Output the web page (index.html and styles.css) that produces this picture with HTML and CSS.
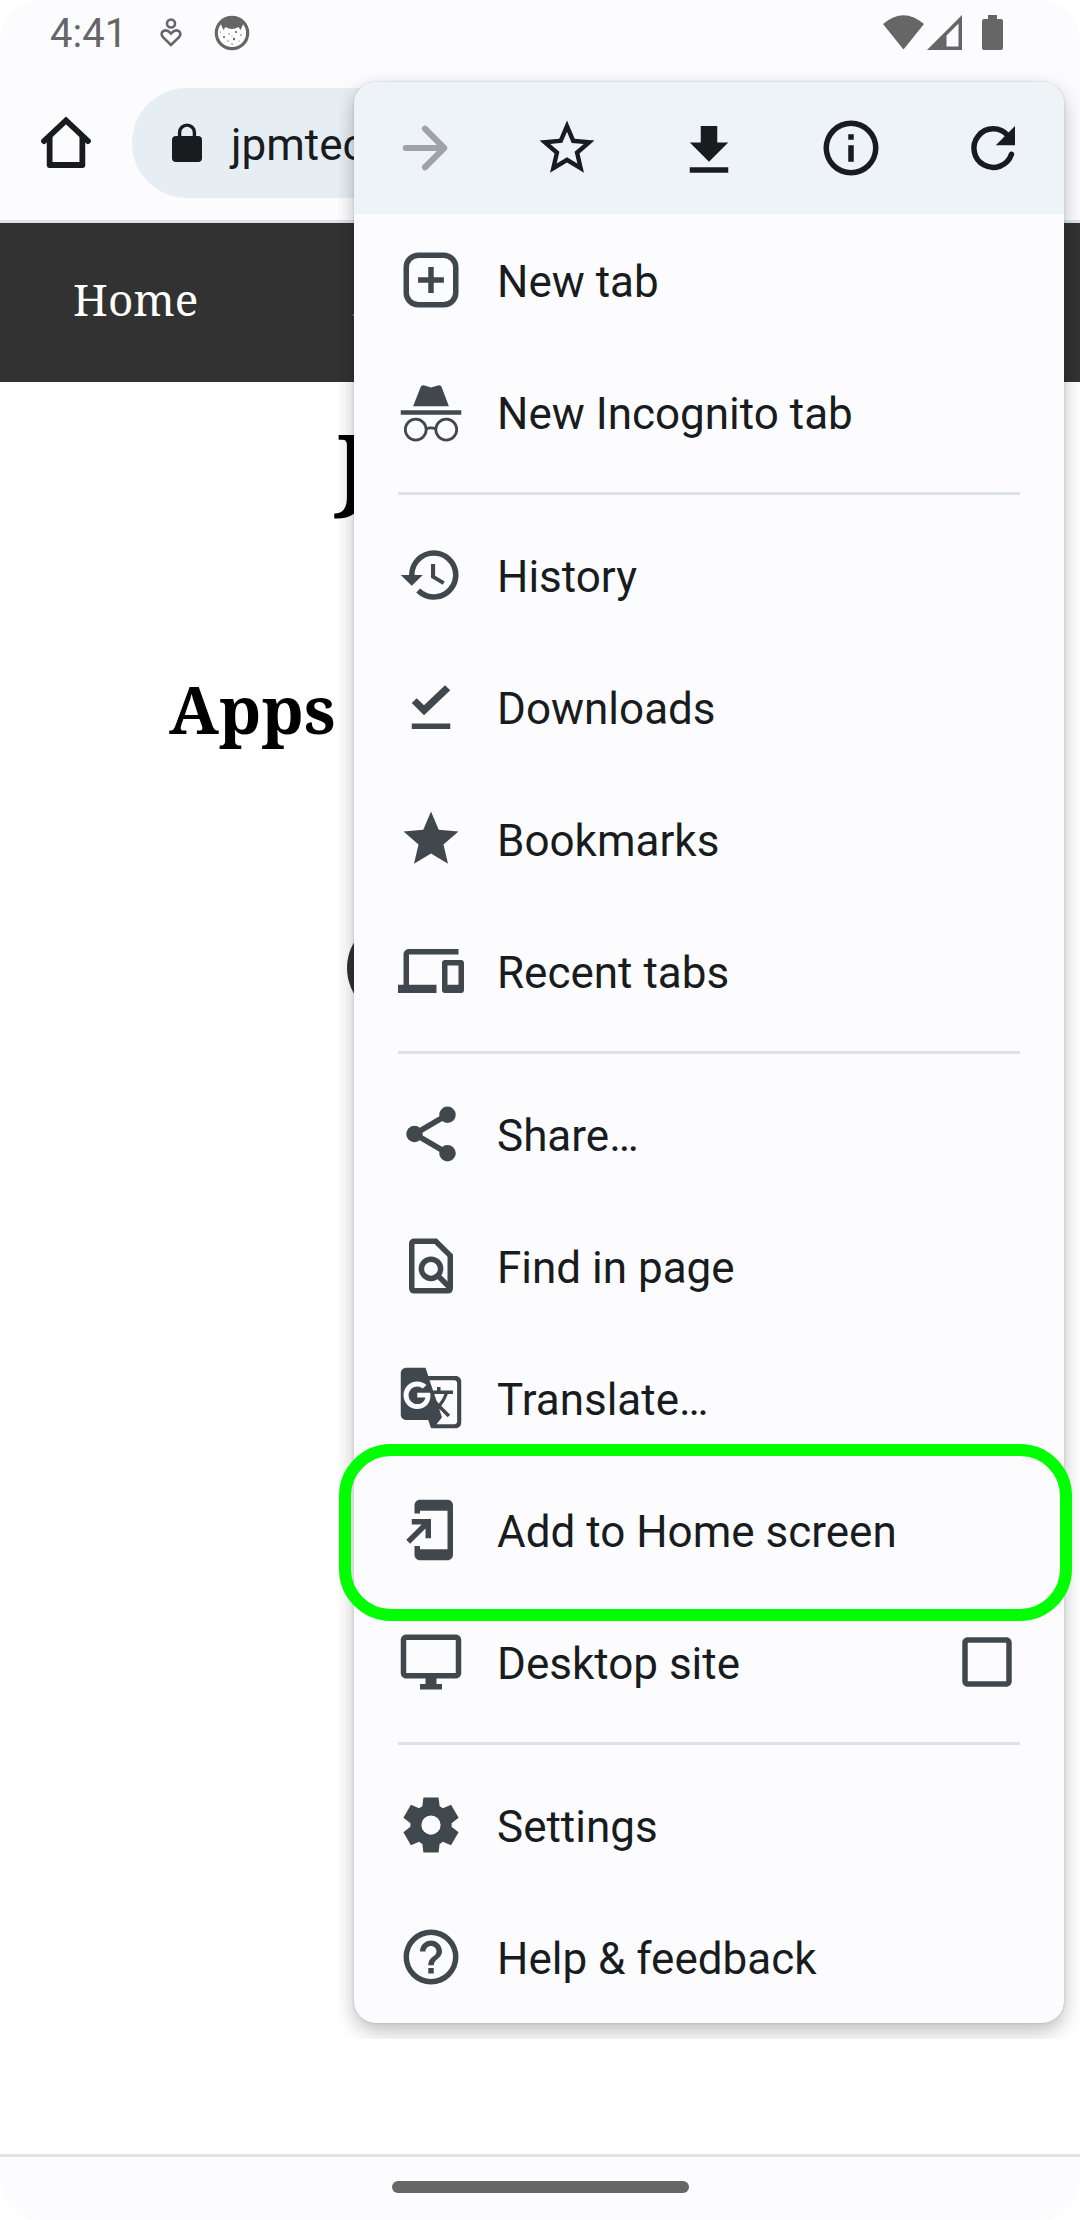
FILE: index.html
```html
<!DOCTYPE html>
<html lang="en">
<head>
<meta charset="utf-8">
<title>Browser menu</title>
<link rel="stylesheet" href="styles.css">
</head>
<body>
<div class="phone">
  <header class="chrome">
    <div class="status">
      <span class="clock">4:41</span>
      <svg class="status-heart" viewBox="0 0 24 32"><circle cx="12" cy="6.5" r="4" fill="none" stroke="currentColor" stroke-width="2.6"/><path d="M12 28L4.200 20.400Q1 16.500 4.200 14.100Q8.200 11.900 12 16.500Q15.800 11.900 19.800 14.100Q23 16.500 19.800 20.400Z" fill="none" stroke="currentColor" stroke-width="2.600"/></svg>
      <svg class="status-face" viewBox="0 0 36 36"><circle cx="18" cy="18" r="15.700" fill="#fff" stroke="currentColor" stroke-width="3.200"/><path d="M6.500 8Q18-2 29.500 8L28 12L26.500 15L24.500 12Q18 16 11.500 12L9.500 15L8 12Z" fill="currentColor"/><g fill="currentColor"><circle cx="10" cy="22" r="1.100"/><circle cx="22" cy="17" r="1.100"/><circle cx="20" cy="24" r="1.200"/><circle cx="15" cy="19" r=".7"/><circle cx="14" cy="26" r=".7"/><circle cx="27" cy="20" r=".8"/><circle cx="25" cy="26" r=".6"/><circle cx="18" cy="29" r=".8"/><circle cx="6.500" cy="17" r=".6"/><circle cx="18" cy="21" r=".5"/></g></svg>
      <svg class="status-signals" viewBox="0 0 122 36"><path d="M0 9Q20.500-8.500 41 9L20.500 34.500Z" fill="currentColor"/><path fill-rule="evenodd" d="M79 0V35H44ZM75.500 8.500L63.500 20.500V31.500H75.500Z" fill="currentColor"/><path d="M105 0h9v4h4a2 2 0 0 1 2 2v27a2 2 0 0 1-2 2h-17a2 2 0 0 1-2-2V6a2 2 0 0 1 2-2h4Z" fill="currentColor"/></svg>
    </div>
    <div class="toolbar">
      <svg class="icon" viewBox="0 0 24 24" fill="none" stroke="currentColor" stroke-width="2.100" stroke-linecap="round" stroke-linejoin="round"><path d="M4 11.300L12 3.800L20 11.300" stroke-linejoin="miter"/><path d="M6.050 10V20H17.950V10"/></svg>
      <div class="omnibox">
        <svg class="lock" viewBox="0 0 30 40"><path d="M7.600 14V9.500a7.400 7.400 0 0 1 14.800 0V14" fill="none" stroke="currentColor" stroke-width="3.400"/><rect y="13" width="30" height="26" rx="4" fill="currentColor"/></svg>
        <span>jpmtec</span>
      </div>
    </div>
  </header>
  <main class="page">
    <nav class="site-nav"><span>Home</span><span>A</span></nav>
    <h1>J</h1>
    <h2>Apps</h2>
    <div class="round-button"></div>
  </main>
  <footer class="gesture-bar"><div class="handle"></div></footer>

  <div class="menu">
    <div class="actions">
      <svg class="icon disabled" viewBox="0 0 24 24" fill="none" stroke="currentColor" stroke-width="2.200" stroke-linecap="round" stroke-linejoin="round"><path d="M5 12H19M12 5L19 12L12 19"/></svg>
      <svg class="icon" viewBox="0 0 24 24"><path d="M22 9.240l-7.190-.62L12 2 9.190 8.630 2 9.240l5.460 4.730L5.820 21 12 17.270 18.180 21l-1.630-7.030L22 9.240zM12 15.400l-3.760 2.270 1-4.280-3.320-2.880 4.380-.38L12 6.100l1.710 4.040 4.380.38-3.320 2.880 1 4.280L12 15.400z"/></svg>
      <svg class="icon" viewBox="0 0 24 24"><path d="M19 10h-4V4H9v6H5l7 7zM5 19v2h14v-2z"/></svg>
      <svg class="icon" viewBox="0 0 24 24"><path d="M11 7h2v2h-2zm0 4h2v6h-2zm1-9a10 10 0 1 0 0 20 10 10 0 0 0 0-20zm0 18a8 8 0 1 1 0-16 8 8 0 0 1 0 16z"/></svg>
      <svg class="icon" viewBox="0 0 24 24"><path d="M18.700 14.300A7 7 0 1 1 17.400 7.500" fill="none" stroke="currentColor" stroke-width="2" stroke-linecap="round"/><path d="M20 4v7h-7z"/></svg>
    </div>
    <div class="item"><svg class="icon" viewBox="0 0 24 24" fill="none" stroke="currentColor" stroke-width="2"><rect x="3" y="3" width="18" height="18" rx="4.400"/><path d="M12 7.300v9.400M7.300 12h9.400"/></svg><span>New tab</span></div>
    <div class="item"><svg class="icon" viewBox="0 0 24 24"><path d="M5.500 9.900L8.200 3Q8.600 2 9.700 2.400L12 3.100L14.500 2.400Q15.500 2 15.900 3L18.500 9.900ZM1 11.400h22V13H1z"/><g fill="none" stroke="currentColor" stroke-width="1"><circle cx="6.450" cy="18.400" r="3.800"/><circle cx="17.550" cy="18.400" r="3.800"/><path d="M10.200 18.200Q12 17.300 13.800 18.200"/></g></svg><span>New Incognito tab</span></div>
    <hr>
    <div class="item"><svg class="icon" viewBox="0 0 24 24"><path d="M13 3a9 9 0 0 0-9 9H1l4 3.900L9 12H6a7 7 0 1 1 2.060 4.940l-1.420 1.420A9 9 0 1 0 13 3zm-1 5v5l4.280 2.540.72-1.210-3.500-2.080V8z"/></svg><span>History</span></div>
    <div class="item"><svg class="icon" viewBox="0 0 24 24"><path d="M5 10.500L6.800 8.800L9.450 11.400L17.100 4.100L19 5.900L9.450 15ZM5 18h14v2H5z"/></svg><span>Downloads</span></div>
    <div class="item"><svg class="icon" viewBox="0 0 24 24"><path d="M12 17.270L18.180 21l-1.640-7.030L22 9.240l-7.190-.61L12 2 9.190 8.630 2 9.240l5.460 4.730L5.820 21z"/></svg><span>Bookmarks</span></div>
    <div class="item"><svg class="icon" viewBox="0 0 24 24"><path d="M4 6h18V4H4c-1.100 0-2 .9-2 2v11H0v3h14v-3H4V6zm19 2h-6c-.55 0-1 .45-1 1v10c0 .55.45 1 1 1h6c.55 0 1-.45 1-1V9c0-.55-.45-1-1-1zm-1 9h-4v-7h4v7z"/></svg><span>Recent tabs</span></div>
    <hr>
    <div class="item"><svg class="icon" viewBox="0 0 24 24"><path d="M18 5L6 12L18 19" fill="none" stroke="currentColor" stroke-width="2"/><circle cx="18" cy="5" r="3"/><circle cx="6" cy="12" r="3"/><circle cx="18" cy="19" r="3"/></svg><span>Share…</span></div>
    <div class="item"><svg class="icon" viewBox="0 0 24 24" fill="none" stroke="currentColor" stroke-width="2"><path d="M13.700 3H6Q5 3 5 4V20Q5 21 6 21H18Q19 21 19 20V8.200Z"/><circle cx="12" cy="13" r="3.500"/><path d="M14.400 15.400L19 20"/></svg><span>Find in page</span></div>
    <div class="item"><svg class="icon" viewBox="0 0 24 24"><path d="M21 4H11l-1-3H3c-1.100 0-2 .9-2 2v15c0 1.100.9 2 2 2h8l1 3h9c1.100 0 2-.9 2-2V6c0-1.100-.9-2-2-2zM7 16c-2.760 0-5-2.240-5-5s2.240-5 5-5c1.350 0 2.480.5 3.350 1.300L9.030 8.570c-.38-.36-1.040-.78-2.030-.78-1.740 0-3.150 1.440-3.150 3.210S5.260 14.210 7 14.210c2.010 0 2.840-1.440 2.920-2.410H7v-1.710h4.680c.07.31.12.61.12 1.020C11.800 13.970 9.890 16 7 16zm6.170-5.420h3.700c-.43 1.250-1.110 2.430-2.050 3.470-.31-.35-.6-.72-.86-1.100l-.79-2.370zm8.330 9.920c0 .55-.45 1-1 1H14l2-2.500-1.040-3.100 3.100 3.100.92-.92-3.300-3.250.02-.02c1.130-1.250 1.930-2.690 2.400-4.220H20v-1.300h-4.530V8h-1.290v1.290h-1.440L11.460 5.500h9.040c.55 0 1 .45 1 1v14z"/></svg><span>Translate…</span></div>
    <div class="item"><svg class="icon" viewBox="0 0 24 24"><path d="M18 1H8c-1.100 0-2 .9-2 2v3h2V5h10v14H8v-1.200H6V21c0 1.100.9 2 2 2h10c1.100 0 2-.9 2-2V3c0-1.100-.9-2-2-2zM10 15h2V8H5v2h3.590L3 15.590 4.410 17 10 11.410z"/></svg><span>Add to Home screen</span><div class="highlight"></div></div>
    <div class="item"><svg class="icon" viewBox="0 0 24 24"><path d="M21 2H3c-1.100 0-2 .9-2 2v12c0 1.100.9 2 2 2h7v2H8v2h8v-2h-2v-2h7c1.100 0 2-.9 2-2V4c0-1.100-.9-2-2-2zm0 14H3V4h18z"/></svg><span>Desktop site</span><svg class="icon checkbox" viewBox="0 0 24 24"><path d="M19 5v14H5V5h14m0-2H5c-1.100 0-2 .9-2 2v14c0 1.100.9 2 2 2h14c1.100 0 2-.9 2-2V5c0-1.100-.9-2-2-2z"/></svg></div>
    <hr>
    <div class="item"><svg class="icon" viewBox="0 0 24 24"><path fill-rule="evenodd" d="M9.250 22l-.4-3.200q-.325-.125-.612-.3t-.563-.375L4.700 19.375l-2.750-4.750 2.575-1.950Q4.500 12.500 4.500 12.338v-.675q0-.163.025-.338L1.950 9.375l2.750-4.750 2.975 1.250q.275-.2.575-.375t.6-.3l.4-3.200h5.500l.4 3.200q.325.125.613.3t.562.375l2.975-1.250 2.750 4.750-2.575 1.950q.025.175.025.338v.674q0 .163-.05.338l2.575 1.950-2.750 4.750-2.950-1.250q-.275.2-.575.375t-.6.3l-.4 3.200zM12 15.500a3.500 3.500 0 1 0 0-7 3.500 3.500 0 0 0 0 7z"/></svg><span>Settings</span></div>
    <div class="item"><svg class="icon" viewBox="0 0 24 24"><path d="M11 18h2v-2h-2v2zm1-16a10 10 0 1 0 0 20 10 10 0 0 0 0-20zm0 18a8 8 0 1 1 0-16 8 8 0 0 1 0 16zm0-14c-2.210 0-4 1.790-4 4h2c0-1.100.9-2 2-2s2 .9 2 2c0 2-3 1.750-3 5h2c0-2.250 3-2.500 3-5 0-2.210-1.790-4-4-4z"/></svg><span>Help &amp; feedback</span></div>
  </div>
</div>
</body>
</html>
```
FILE: styles.css
```css
* { box-sizing: border-box; }

body {
  margin: 0;
  background: #fff;
  font-family: Roboto, "Liberation Sans", sans-serif;
  color: #191c1e;
}

.phone {
  position: relative;
  display: flex;
  flex-direction: column;
  width: 1080px;
  height: 2220px;
  overflow: hidden;
}

.icon {
  flex: none;
  width: 66px;
  height: 66px;
  fill: currentColor;
}
.icon[fill="none"] { fill: none; }

.chrome {
  height: 223px;
  background: #fcfcff;
  border-bottom: 3px solid #dce4e9;
  border-radius: 40px 40px 0 0;
}

.status {
  display: flex;
  align-items: center;
  height: 66px;
  padding: 0 75px 0 50px;
  color: #666;
}
.clock { width: 109px; font-size: 40px; line-height: 66px; padding-top: 2px; }
.status-heart { width: 24px; height: 32px; }
.status-face { width: 36px; height: 36px; margin-left: 31px; }
.status-signals { width: 122px; height: 36px; margin-left: auto; }

.toolbar {
  display: flex;
  align-items: center;
  gap: 33px;
  height: 110px;
  margin-top: 22px;
  padding: 0 180px 0 33px;
}
.omnibox {
  display: flex;
  flex: 1;
  align-items: center;
  gap: 29px;
  height: 110px;
  padding-left: 40px;
  border-radius: 55px;
  background: #e6edf3;
  font-size: 44px;
}
.omnibox span { padding-top: 3px; }
.lock { width: 30px; height: 40px; }

.page {
  flex: 1;
  background: #fff;
  color: #000;
  font-family: "Noto Serif", "DejaVu Serif", serif;
}
.site-nav {
  display: flex;
  gap: 155px;
  height: 159px;
  padding: 46px 0 0 73px;
  background: #323232;
  color: #fff;
  font-size: 44px;
  line-height: 60px;
}
.page h1 {
  height: 120px;
  margin: 22px 0 0 336px;
  font-size: 88px;
  line-height: 120px;
}
.page h2 {
  height: 90px;
  margin: 139px 0 0 169px;
  font-size: 66px;
  line-height: 90px;
}
.round-button {
  width: 386px;
  height: 100px;
  margin: 165px auto 0 347px;
  border-radius: 50px;
  background: #323232;
}

.gesture-bar {
  display: flex;
  justify-content: center;
  height: 66px;
  padding-top: 24px;
  border-top: 3px solid #dce4e9;
  border-radius: 0 0 40px 40px;
  background: #fcfcff;
}
.handle {
  width: 297px;
  height: 12px;
  border-radius: 6px;
  background: #666;
}

/* Overflow menu floating above the page */
.menu {
  position: absolute;
  top: 82px;
  left: 354px;
  width: 710px;
  border-radius: 22px;
  background: #fcfcff;
  box-shadow: 0 8px 20px rgba(0, 0, 0, .26), 0 0 3px rgba(0, 0, 0, .15);
  clip-path: inset(-16px);
}
.actions {
  display: grid;
  grid-template-columns: repeat(5, 1fr);
  align-items: center;
  justify-items: center;
  height: 132px;
  border-radius: 22px 22px 0 0;
  background: #edf3f7;
}
.disabled { color: #9fa3a6; }
.item {
  position: relative;
  display: flex;
  align-items: center;
  gap: 33px;
  height: 132px;
  padding: 0 44px;
  font-size: 44px;
}
.item span { padding-top: 4px; }
.item .icon { color: #41484d; }
.item .checkbox { margin-left: auto; }
.menu hr {
  height: 3px;
  margin: 14px 44px;
  border: 0;
  background: #dce4ea;
}

/* Callout ring around the menu entry */
.highlight {
  position: absolute;
  top: -20px;
  left: -15px;
  width: 733px;
  height: 177px;
  border: 12px solid #0f0;
  border-radius: 52px;
}
```
